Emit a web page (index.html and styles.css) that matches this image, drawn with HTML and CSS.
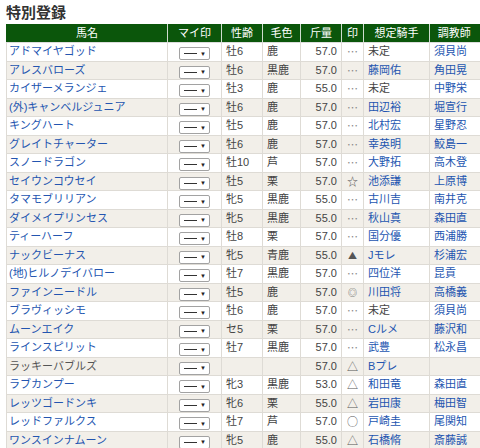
FILE: index.html
```html
<!DOCTYPE html>
<html lang="ja">
<head>
<meta charset="utf-8">
<title>特別登録</title>
<link rel="stylesheet" href="styles.css">
</head>
<body>
<div class="page">
  <h1 class="title">特別登録</h1>
  <table class="entries">
    <colgroup>
      <col class="c-name"><col class="c-my"><col class="c-age"><col class="c-color"><col class="c-wt"><col class="c-mark"><col class="c-jockey"><col class="c-trainer">
    </colgroup>
    <thead>
      <tr><th>馬名</th><th>マイ印</th><th>性齢</th><th>毛色</th><th>斤量</th><th>印</th><th>想定騎手</th><th class="th-trainer">調教師</th></tr>
    </thead>
    <tbody>
      <tr><td class="name"><a>アドマイヤゴッド</a></td><td class="my"><span class="sel"><span class="dash"></span><span class="arr">▼</span></span></td><td class="age">牡6</td><td class="col">鹿</td><td class="wt">57.0</td><td class="mk dots">…</td><td class="jk">未定</td><td class="tr"><a>須貝尚</a></td></tr>
      <tr><td class="name"><a>アレスバローズ</a></td><td class="my"><span class="sel"><span class="dash"></span><span class="arr">▼</span></span></td><td class="age">牡6</td><td class="col">黒鹿</td><td class="wt">57.0</td><td class="mk dots">…</td><td class="jk"><a>藤岡佑</a></td><td class="tr"><a>角田晃</a></td></tr>
      <tr><td class="name"><a>カイザーメランジェ</a></td><td class="my"><span class="sel"><span class="dash"></span><span class="arr">▼</span></span></td><td class="age">牡3</td><td class="col">鹿</td><td class="wt">55.0</td><td class="mk dots">…</td><td class="jk">未定</td><td class="tr"><a>中野栄</a></td></tr>
      <tr><td class="name"><a>(外)キャンベルジュニア</a></td><td class="my"><span class="sel"><span class="dash"></span><span class="arr">▼</span></span></td><td class="age">牡6</td><td class="col">鹿</td><td class="wt">57.0</td><td class="mk dots">…</td><td class="jk"><a>田辺裕</a></td><td class="tr"><a>堀宣行</a></td></tr>
      <tr><td class="name"><a>キングハート</a></td><td class="my"><span class="sel"><span class="dash"></span><span class="arr">▼</span></span></td><td class="age">牡5</td><td class="col">鹿</td><td class="wt">57.0</td><td class="mk dots">…</td><td class="jk"><a>北村宏</a></td><td class="tr"><a>星野忍</a></td></tr>
      <tr><td class="name"><a>グレイトチャーター</a></td><td class="my"><span class="sel"><span class="dash"></span><span class="arr">▼</span></span></td><td class="age">牡6</td><td class="col">鹿</td><td class="wt">57.0</td><td class="mk dots">…</td><td class="jk"><a>幸英明</a></td><td class="tr"><a>鮫島一</a></td></tr>
      <tr><td class="name"><a>スノードラゴン</a></td><td class="my"><span class="sel"><span class="dash"></span><span class="arr">▼</span></span></td><td class="age">牡10</td><td class="col">芦</td><td class="wt">57.0</td><td class="mk dots">…</td><td class="jk"><a>大野拓</a></td><td class="tr"><a>高木登</a></td></tr>
      <tr><td class="name"><a>セイウンコウセイ</a></td><td class="my"><span class="sel"><span class="dash"></span><span class="arr">▼</span></span></td><td class="age">牡5</td><td class="col">栗</td><td class="wt">57.0</td><td class="mk">☆</td><td class="jk"><a>池添謙</a></td><td class="tr"><a>上原博</a></td></tr>
      <tr><td class="name"><a>タマモブリリアン</a></td><td class="my"><span class="sel"><span class="dash"></span><span class="arr">▼</span></span></td><td class="age">牝5</td><td class="col">黒鹿</td><td class="wt">55.0</td><td class="mk dots">…</td><td class="jk"><a>古川吉</a></td><td class="tr"><a>南井克</a></td></tr>
      <tr><td class="name"><a>ダイメイプリンセス</a></td><td class="my"><span class="sel"><span class="dash"></span><span class="arr">▼</span></span></td><td class="age">牝5</td><td class="col">黒鹿</td><td class="wt">55.0</td><td class="mk dots">…</td><td class="jk"><a>秋山真</a></td><td class="tr"><a>森田直</a></td></tr>
      <tr><td class="name"><a>ティーハーフ</a></td><td class="my"><span class="sel"><span class="dash"></span><span class="arr">▼</span></span></td><td class="age">牡8</td><td class="col">栗</td><td class="wt">57.0</td><td class="mk dots">…</td><td class="jk"><a>国分優</a></td><td class="tr"><a>西浦勝</a></td></tr>
      <tr><td class="name"><a>ナックビーナス</a></td><td class="my"><span class="sel"><span class="dash"></span><span class="arr">▼</span></span></td><td class="age">牝5</td><td class="col">青鹿</td><td class="wt">55.0</td><td class="mk small">▲</td><td class="jk"><a>Jモレ</a></td><td class="tr"><a>杉浦宏</a></td></tr>
      <tr><td class="name"><a>(地)ヒルノデイバロー</a></td><td class="my"><span class="sel"><span class="dash"></span><span class="arr">▼</span></span></td><td class="age">牡7</td><td class="col">黒鹿</td><td class="wt">57.0</td><td class="mk dots">…</td><td class="jk"><a>四位洋</a></td><td class="tr"><a>昆貢</a></td></tr>
      <tr><td class="name"><a>ファインニードル</a></td><td class="my"><span class="sel"><span class="dash"></span><span class="arr">▼</span></span></td><td class="age">牡5</td><td class="col">鹿</td><td class="wt">57.0</td><td class="mk small">◎</td><td class="jk"><a>川田将</a></td><td class="tr"><a>高橋義</a></td></tr>
      <tr><td class="name"><a>ブラヴィッシモ</a></td><td class="my"><span class="sel"><span class="dash"></span><span class="arr">▼</span></span></td><td class="age">牡6</td><td class="col">鹿</td><td class="wt">57.0</td><td class="mk dots">…</td><td class="jk">未定</td><td class="tr"><a>須貝尚</a></td></tr>
      <tr><td class="name"><a>ムーンエイク</a></td><td class="my"><span class="sel"><span class="dash"></span><span class="arr">▼</span></span></td><td class="age">セ5</td><td class="col">栗</td><td class="wt">57.0</td><td class="mk dots">…</td><td class="jk"><a>Cルメ</a></td><td class="tr"><a>藤沢和</a></td></tr>
      <tr><td class="name"><a>ラインスピリット</a></td><td class="my"><span class="sel"><span class="dash"></span><span class="arr">▼</span></span></td><td class="age">牡7</td><td class="col">黒鹿</td><td class="wt">57.0</td><td class="mk dots">…</td><td class="jk"><a>武豊</a></td><td class="tr"><a>松永昌</a></td></tr>
      <tr><td class="name">ラッキーバブルズ</td><td class="my"><span class="sel"><span class="dash"></span><span class="arr">▼</span></span></td><td class="age"></td><td class="col"></td><td class="wt">57.0</td><td class="mk">△</td><td class="jk"><a>Bプレ</a></td><td class="tr"></td></tr>
      <tr><td class="name"><a>ラブカンプー</a></td><td class="my"><span class="sel"><span class="dash"></span><span class="arr">▼</span></span></td><td class="age">牝3</td><td class="col">黒鹿</td><td class="wt">53.0</td><td class="mk">△</td><td class="jk"><a>和田竜</a></td><td class="tr"><a>森田直</a></td></tr>
      <tr><td class="name"><a>レッツゴードンキ</a></td><td class="my"><span class="sel"><span class="dash"></span><span class="arr">▼</span></span></td><td class="age">牝6</td><td class="col">栗</td><td class="wt">55.0</td><td class="mk">△</td><td class="jk"><a>岩田康</a></td><td class="tr"><a>梅田智</a></td></tr>
      <tr><td class="name"><a>レッドファルクス</a></td><td class="my"><span class="sel"><span class="dash"></span><span class="arr">▼</span></span></td><td class="age">牡7</td><td class="col">芦</td><td class="wt">57.0</td><td class="mk">○</td><td class="jk"><a>戸崎圭</a></td><td class="tr"><a>尾関知</a></td></tr>
      <tr><td class="name"><a>ワンスインナムーン</a></td><td class="my"><span class="sel"><span class="dash"></span><span class="arr">▼</span></span></td><td class="age">牝5</td><td class="col">鹿</td><td class="wt">55.0</td><td class="mk">△</td><td class="jk"><a>石橋脩</a></td><td class="tr"><a>斎藤誠</a></td></tr>
    </tbody>
  </table>
</div>
</body>
</html>
```

FILE: styles.css
```css
html, body {
  margin: 0;
  padding: 0;
  background: #fff;
  overflow: hidden;
}
body {
  font-family: "Liberation Sans", "Noto Sans CJK JP", sans-serif;
  font-size: 11px;
  color: #444;
  width: 480px;
  height: 448px;
}
.page {
  padding-left: 6px;
}
.title {
  margin: 0;
  height: 24px;
  line-height: 23px;
  font-size: 15px;
  font-weight: bold;
  color: #333;
  font-family: "Noto Sans CJK JP", sans-serif;
}
.entries {
  border-collapse: collapse;
  table-layout: fixed;
  width: 484px;
}
.c-name { width: 161px; }
.c-my { width: 54px; }
.c-age { width: 41px; }
.c-color { width: 38px; }
.c-wt { width: 41px; }
.c-mark { width: 22px; }
.c-jockey { width: 66px; }
.c-trainer { width: 61px; }

.entries th {
  background: #0b560b;
  color: #fff;
  font-weight: normal;
  height: 18px;
  padding: 0;
  text-align: center;
  border-left: 1px solid #cfdccf;
  border-bottom: 1px solid #dcdcdc;
  line-height: 17px;
}
.entries th:first-child {
  border-left: 1px solid #0b560b;
}
.entries th.th-trainer {
  padding-right: 12px;
}
.entries td {
  height: 17.5px;
  padding: 0 4px;
  border: 1px solid #dedbd5;
  line-height: 17px;
  white-space: nowrap;
  overflow: hidden;
}
.entries tbody tr:nth-child(even) td {
  background: #f2efe9;
}
.entries a {
  color: #2355b0;
  text-decoration: none;
}
.entries td.name {
  padding-left: 2px;
  color: #555;
}
.entries td.my {
  text-align: center;
  padding: 0;
}
.entries td.wt {
  text-align: right;
  padding-right: 4px;
}
.entries td.mk {
  text-align: center;
  padding: 0;
  color: #555;
  font-family: "Noto Sans CJK JP", sans-serif;
}
.entries td.mk.dots {
  color: #888;
}
.entries td.mk.small {
  font-size: 9px;
}
.sel {
  display: inline-flex;
  align-items: center;
  box-sizing: border-box;
  width: 31px;
  height: 13px;
  margin-top: 3px;
  padding: 0 3px 0 4px;
  border: 1px solid #a2a2a2;
  border-radius: 2px;
  background: #fff;
  vertical-align: middle;
  gap: 3px;
}
.dash {
  display: block;
  width: 14px;
  height: 0;
  border-top: 1px solid #333;
}
.arr {
  font-size: 6px;
  line-height: 6px;
  color: #222;
}
```
